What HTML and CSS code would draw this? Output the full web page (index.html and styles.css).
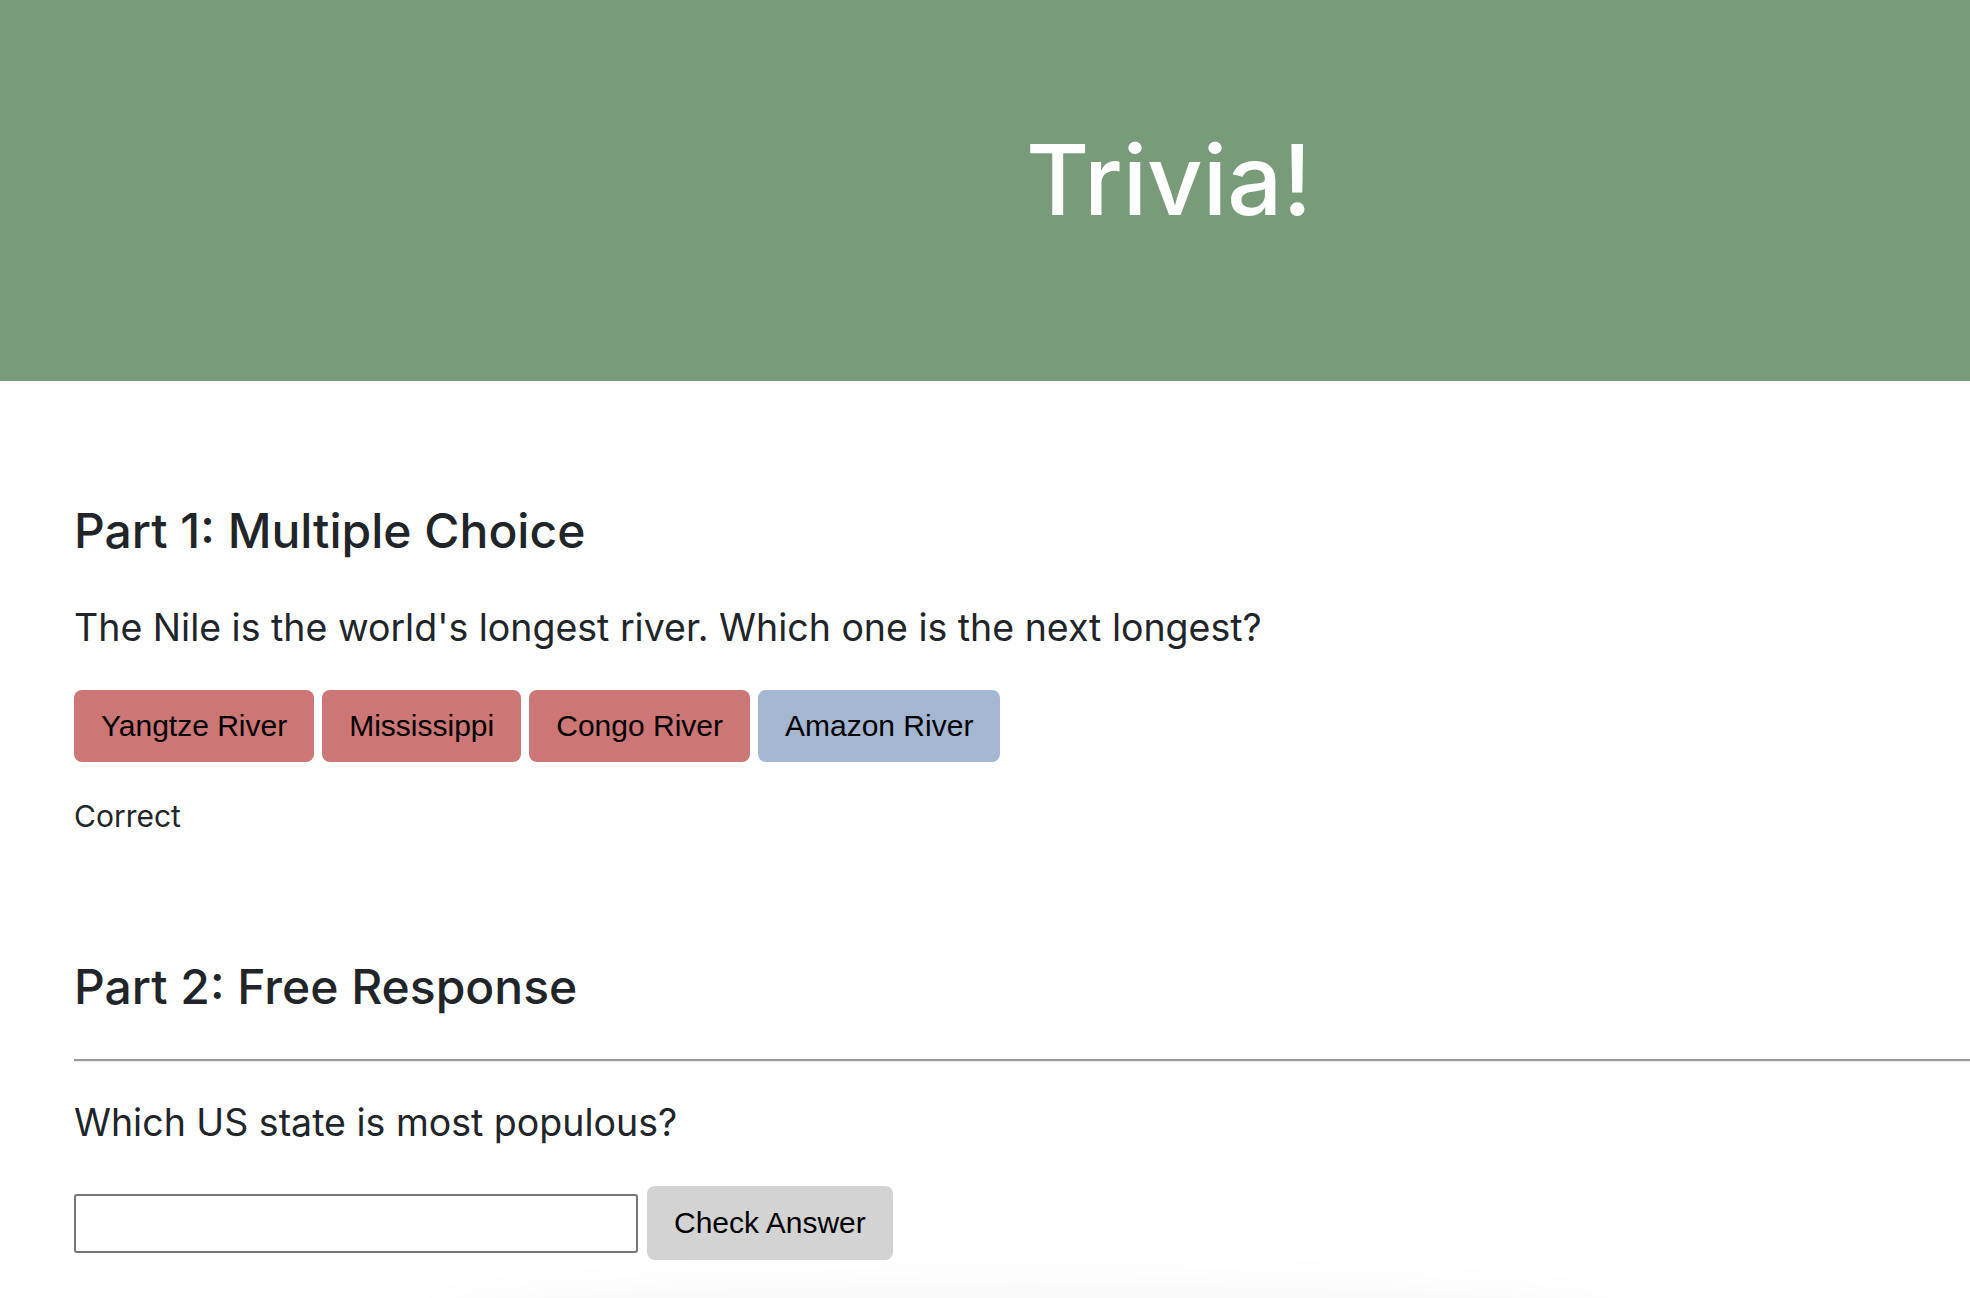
FILE: index.html
```html
<!DOCTYPE html>
<html lang="en">
<head>
<meta charset="utf-8">
<title>Trivia!</title>
<link rel="stylesheet" href="styles.css">
</head>
<body>
<header class="banner">
  <h1 class="title">Trivia!</h1>
</header>
<main class="content">
  <section class="part part-one">
    <h2 class="part-title">Part 1: Multiple Choice</h2>
    <p class="question">The Nile is the world's longest river. Which one is the next longest?</p>
    <div class="choices">
      <button class="choice wrong">Yangtze River</button>
      <button class="choice wrong">Mississippi</button>
      <button class="choice wrong">Congo River</button>
      <button class="choice right">Amazon River</button>
    </div>
    <p class="feedback">Correct</p>
  </section>
  <section class="part part-two">
    <h2 class="part-title">Part 2: Free Response</h2>
    <hr class="divider">
    <p class="question">Which US state is most populous?</p>
    <div class="answer-row">
      <input class="answer-input" type="text">
      <button class="check">Check Answer</button>
    </div>
  </section>
</main>
<div class="bottom-shade"></div>
</body>
</html>
```
FILE: styles.css
```css
html, body {
  margin: 0;
  padding: 0;
  background: #ffffff;
  overflow: hidden;
}
body {
  font-family: "Inter", "DejaVu Sans", sans-serif;
  color: #212529;
  height: 1298px;
  position: relative;
}
.banner {
  box-sizing: border-box;
  height: 381px;
  background: #789b7a;
  padding: 132px 0 0 368px;
  text-align: center;
}
.title {
  margin: 0;
  font-size: 97px;
  line-height: 96px;
  font-weight: 500;
  color: #ffffff;
}
.content {
  padding: 0 0 0 74px;
}
.part-title {
  margin: 0;
  font-size: 48px;
  line-height: 60px;
  font-weight: 500;
}
.part-one {
  padding-top: 120px;
}
.question {
  margin: 0;
  font-size: 37.5px;
  line-height: 46px;
  font-weight: 400;
}
.part-one .question {
  margin-top: 44px;
}
.choices {
  display: flex;
  gap: 8px;
  margin-top: 39px;
}
.choice, .check {
  border: none;
  border-radius: 8px;
  font-family: "Liberation Sans", Arial, sans-serif;
  font-size: 30px;
  color: #000000;
  padding: 0 27px;
  height: 72px;
  cursor: pointer;
}
.wrong {
  background: #cc7676;
}
.right {
  background: #a5b6d0;
}
.feedback {
  margin: 37px 0 0 0;
  font-size: 30px;
  line-height: 34px;
}
.part-two {
  padding-top: 124px;
}
.divider {
  margin: 42px 0 0 0;
  border: none;
  border-top: 2px solid #9a9a9a;
  border-bottom: 1px solid #ececec;
  height: 0;
}
.part-two .question {
  margin-top: 38px;
}
.answer-row {
  display: flex;
  align-items: center;
  gap: 9px;
  margin-top: 40px;
}
.answer-input {
  box-sizing: border-box;
  width: 564px;
  height: 59px;
  border: 2px solid #767676;
  border-radius: 3px;
  margin: 0;
}
.check {
  height: 74px;
  background: #d3d3d3;
}
.bottom-shade {
  position: absolute;
  left: 430px;
  width: 1200px;
  top: 1285px;
  height: 60px;
  border-radius: 50%;
  box-shadow: 0 0 40px 10px rgba(0, 0, 0, 0.025);
  background: rgba(0, 0, 0, 0.02);
}
```
